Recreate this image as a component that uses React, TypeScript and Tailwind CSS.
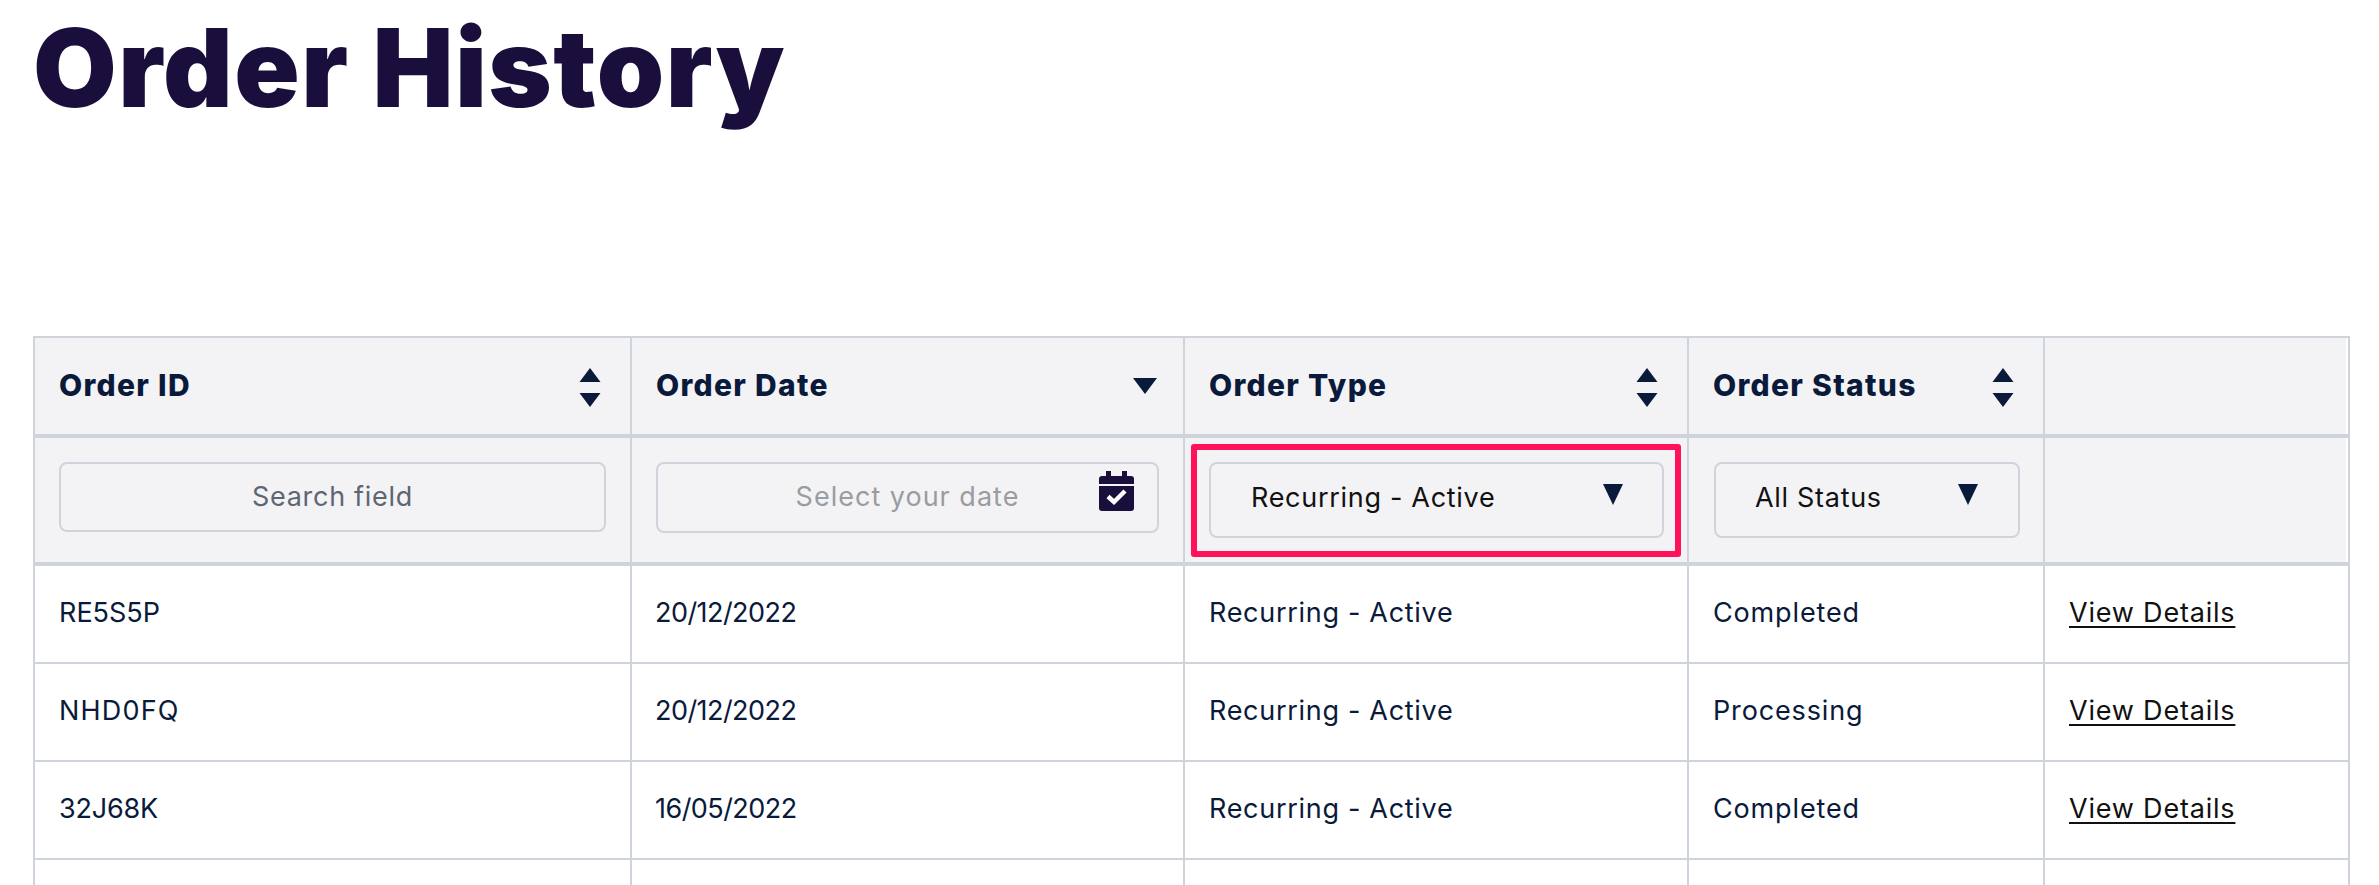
const F = "font-['Inter','Liberation_Sans',sans-serif]";

function Sort() {
  return (
    <svg width="22" height="40" viewBox="0 0 22 40" className="shrink-0 fill-[#0a1a3a] mt-[3px]">
      <path d="M11 0 L21.5 14 L.5 14 Z" />
      <path d="M.5 25 L21.5 25 L11 39 Z" />
    </svg>
  );
}

function Down({ w = 24, h = 16 }: { w?: number; h?: number }) {
  return (
    <svg width={w} height={h} viewBox={`0 0 ${w} ${h}`} className="shrink-0 fill-[#0a1a3a]">
      <path d={`M0 0 L${w} 0 L${w / 2} ${h} Z`} />
    </svg>
  );
}

function Calendar() {
  return (
    <svg width="35" height="40" viewBox="0 0 35 40" className="shrink-0">
      <path fill="#1a0f3c" d="M7 0h5v5h11V0h5v5h4a3 3 0 0 1 3 3v5H0V8a3 3 0 0 1 3-3h4z" />
      <path fill="#1a0f3c" d="M0 15h35v22a3 3 0 0 1-3 3H3a3 3 0 0 1-3-3z" />
      <path fill="none" stroke="#fff" strokeWidth="4.5" d="M9 25.5l6 5.5 11-11" />
    </svg>
  );
}

const cols = "grid grid-cols-[597px_553px_504px_356px_303px]";
const cell = "border-l-2 border-[#cfd4dc] flex items-center min-w-0";
const wide = "tracking-[0.7px]";

const rows = [
  { id: "RE5S5P", idT: "tracking-[0px]", date: "20/12/2022", status: "Completed" },
  { id: "NHD0FQ", idT: "tracking-[1.2px]", date: "20/12/2022", status: "Processing" },
  { id: "32J68K", idT: "tracking-[-0.2px]", date: "16/05/2022", status: "Completed" },
];

function HeadCell({ label, pr, children }: { label: string; pr: string; children: React.ReactNode }) {
  return (
    <div className={`${cell} bg-[#f3f3f6] h-[96px] pl-6 ${pr} justify-between`}>
      <span className="text-[30px] font-extrabold text-[#0a1a3a] tracking-[1.3px] pb-[2px]">{label}</span>
      {children}
    </div>
  );
}

export default function App() {
  return (
    <div className={`${F} bg-white h-[885px] w-[2379px] overflow-hidden pl-[33px]`}>
      <h1 className="h-[336px] pt-[6px] text-[108px] leading-[124px] font-black text-[#1a0f3c] tracking-[1.45px]">
        Order History
      </h1>
      <div className="w-[2315px] border-t-2 border-r-2 border-[#cfd4dc] box-content">
        <div className={`${cols} border-b-4 border-[#cfd4dc]`}>
          <HeadCell label="Order ID" pr="pr-[29px]"><Sort /></HeadCell>
          <HeadCell label="Order Date" pr="pr-[26px]"><Down /></HeadCell>
          <HeadCell label="Order Type" pr="pr-[29px]"><Sort /></HeadCell>
          <HeadCell label="Order Status" pr="pr-[29px]"><Sort /></HeadCell>
          <div className={`${cell} bg-[#f3f3f6] h-[96px]`} />
        </div>
        <div className={`${cols} border-b-4 border-[#cfd4dc] text-[27px] ${wide}`}>
          <div className={`${cell} bg-[#f3f3f6] h-[124px] pl-6 pr-[24px] items-start pt-6`}>
            <div className="w-full h-[70px] rounded-lg border-2 border-[#cfd4dc] flex items-center justify-center text-[#5f6670]">
              Search field
            </div>
          </div>
          <div className={`${cell} bg-[#f3f3f6] h-[124px] pl-6 pr-[24px] items-start pt-6`}>
            <div className="relative w-full h-[71px] rounded-lg border-2 border-[#cfd4dc] flex items-center justify-center text-[#9a9ca1] tracking-[1px]">
              Select your date
              <span className="absolute right-[23px] top-[7px] flex"><Calendar /></span>
            </div>
          </div>
          <div className={`${cell} bg-[#f3f3f6] h-[124px] pl-6 pr-[23px] items-start pt-6 relative`}>
            <div className="w-full h-[76px] pb-[4px] rounded-lg border-2 border-[#cfd4dc] flex items-center justify-between pl-[40px] pr-[39px] text-[#111]">
              <span>Recurring - Active</span>
              <span className="flex -translate-y-[4px]"><Down w={20} h={21} /></span>
            </div>
            <div className="absolute left-[6px] top-[6px] w-[490px] h-[113px] border-[6px] border-[#ff1259] rounded-[3px]" />
          </div>
          <div className={`${cell} bg-[#f3f3f6] h-[124px] pl-[25px] pr-[23px] items-start pt-6`}>
            <div className="w-full h-[76px] pb-[4px] rounded-lg border-2 border-[#cfd4dc] flex items-center justify-between pl-[39px] pr-[40px] text-[#111]">
              <span>All Status</span>
              <span className="flex -translate-y-[4px]"><Down w={20} h={21} /></span>
            </div>
          </div>
          <div className={`${cell} bg-[#f3f3f6] h-[124px]`} />
        </div>
        {rows.map((r) => (
          <div key={r.id} className={`${cols} border-b-2 border-[#cfd4dc] text-[27px] text-[#0a1a3a]`}>
            <div className={`${cell} h-[96px] pl-6 pb-[2px] ${r.idT}`}>{r.id}</div>
            <div className={`${cell} h-[96px] pl-[23px] pb-[2px] tracking-[-0.55px]`}>{r.date}</div>
            <div className={`${cell} h-[96px] pl-6 pb-[2px] ${wide}`}>Recurring - Active</div>
            <div className={`${cell} h-[96px] pl-6 pb-[2px] tracking-[0.85px]`}>{r.status}</div>
            <div className={`${cell} h-[96px] pl-6 pb-[2px] tracking-[0.8px]`}>
              <a className="underline text-[#111] underline-offset-4">View Details</a>
            </div>
          </div>
        ))}
        <div className={cols}>
          {[0, 1, 2, 3, 4].map((i) => (
            <div key={i} className={`${cell} h-[96px]`} />
          ))}
        </div>
      </div>
    </div>
  );
}
